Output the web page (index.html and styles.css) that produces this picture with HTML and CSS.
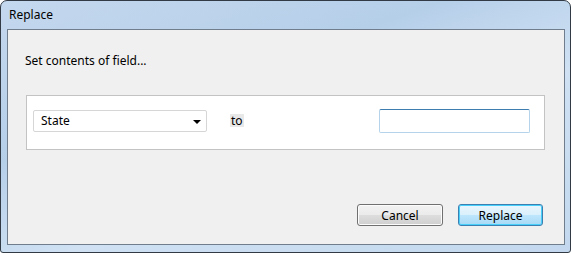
FILE: index.html
```html
<!DOCTYPE html>
<html lang="en">
<head>
    <meta charset="UTF-8">
    <title>Replace</title>
    <link rel="stylesheet" href="styles.css">
</head>
<body>
    <div class="window">
        <div class="titlebar">Replace</div>
        <div class="client">
            <p class="prompt">Set contents of field...</p>

            <div class="panel">
                <div class="combo">
                    <span>State</span>
                    <span class="arrow"></span>
                </div>
                <span class="to">to</span>
                <input type="text" class="value">
            </div>

            <div class="actions">
                <button type="button" class="btn">Cancel</button>
                <button type="button" class="btn btn-default">Replace</button>
            </div>
        </div>
    </div>
</body>
</html>
```

FILE: styles.css
```css
body {
    margin: 0;
    font-family: "Noto Sans", sans-serif;
    font-size: 12px;
    color: #000;
    background: #fff;
}
.window {
    width: 571px;
    height: 253px;
    box-sizing: border-box;
    border: 1px solid #323b45;
    border-radius: 7px 7px 3px 3px;
    background: linear-gradient(160deg, #c4d8ee 0%, #b6cfe9 35%, #cfe1f3 60%, #c3d8ee 100%);
    padding: 0 5px 7px 6px;
    display: flex;
    flex-direction: column;
}
.titlebar {
    height: 28px;
    box-sizing: border-box;
    padding: 6px 0 0 2px;
    font-size: 12px;
    line-height: 16px;
}
.client {
    flex: 1;
    border: 1px solid #6f7d8d;
    background: #f0f0f0;
    display: flex;
    flex-direction: column;
}
.prompt {
    margin: 22px 0 0 17px;
    line-height: 17px;
}
.panel {
    margin: 26px 19px 0 18px;
    height: 55px;
    box-sizing: border-box;
    border: 1px solid #c3c3c3;
    background: #fff;
    display: flex;
    align-items: center;
    padding: 0 14px 4px 6px;
}
.combo {
    width: 174px;
    height: 22px;
    box-sizing: border-box;
    border: 1px solid #d6d6d6;
    border-radius: 2px;
    display: flex;
    align-items: center;
    justify-content: space-between;
    padding: 0 5px 0 7px;
}
.arrow {
    width: 0;
    height: 0;
    border-left: 4px solid transparent;
    border-right: 4px solid transparent;
    border-top: 4px solid #000;
    margin-top: 2px;
}
.to {
    margin-left: 23px;
    background: #e8e8e8;
    line-height: 13px;
    padding: 0 1px;
}
.value {
    margin-left: auto;
    width: 151px;
    height: 24px;
    box-sizing: border-box;
    border: 1px solid #b5d3ea;
    border-top-color: #3d7db0;
    border-radius: 2px;
    background: #fff;
    outline: none;
}
.actions {
    margin-top: auto;
    display: flex;
    justify-content: flex-end;
    gap: 15px;
    padding: 0 21px 18px 0;
}
.btn {
    width: 86px;
    height: 22px;
    border: 1px solid #707070;
    border-radius: 3px;
    background: linear-gradient(#f2f2f2 0%, #ebebeb 50%, #dddddd 51%, #cfcfcf 100%);
    font-family: inherit;
    font-size: 12px;
    padding: 0;
    box-shadow: inset 0 0 0 1px #fcfcfc;
}
.btn-default {
    width: 85px;
    border-color: #3c7fb1;
    background: linear-gradient(#eaf6fd 0%, #d9f0fc 50%, #bee6fd 51%, #a7d9f5 100%);
    box-shadow: inset 0 0 0 1px #48d0fb;
}
```
